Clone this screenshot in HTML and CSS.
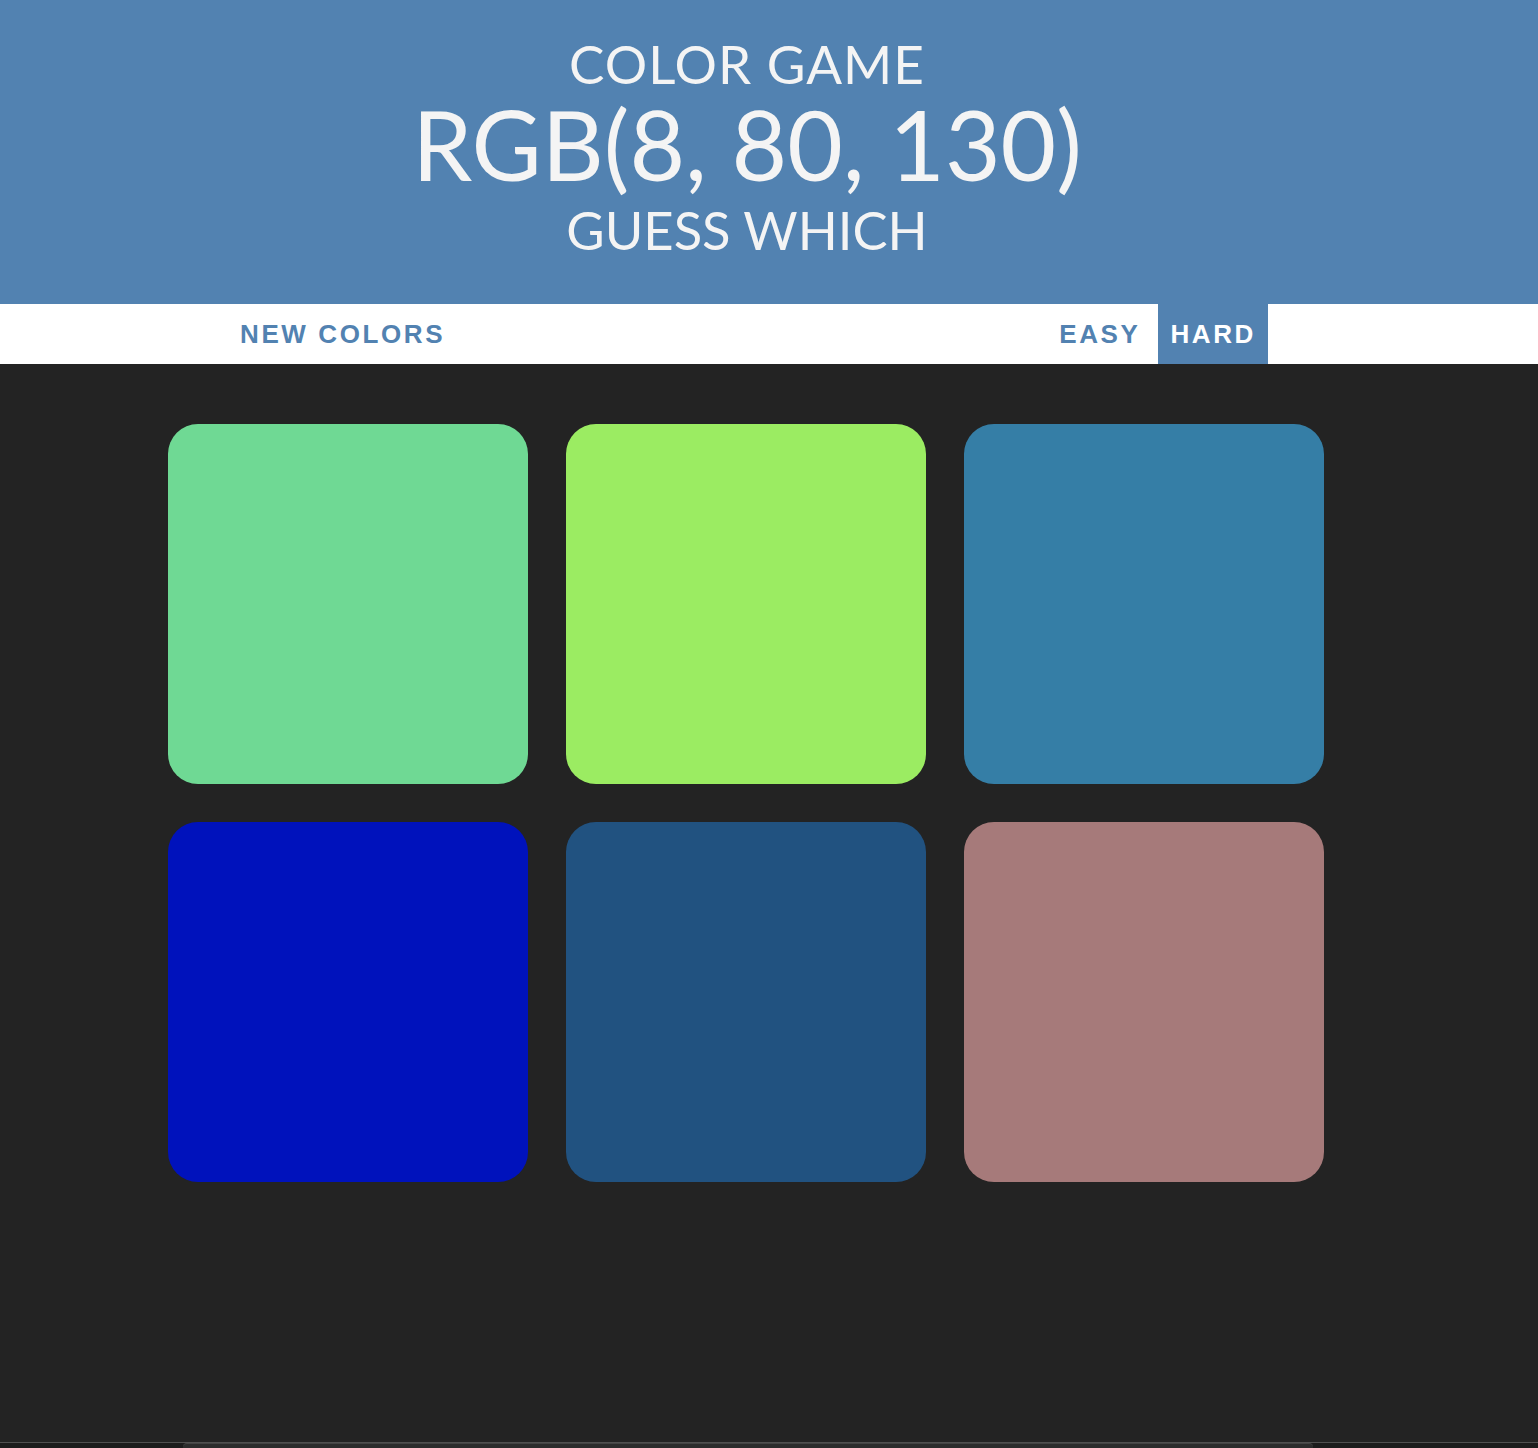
FILE: index.html
```html
<!DOCTYPE html>
<html lang="en">
<head>
<meta charset="utf-8">
<title>Color Game</title>
<link rel="stylesheet" href="styles.css">
</head>
<body>
<header class="banner">
  <h1 class="title">
    <span class="title-line title-first">COLOR GAME</span>
    <span class="title-rgb">RGB(8, 80, 130)</span>
    <span class="title-line title-last">GUESS WHICH</span>
  </h1>
</header>
<nav class="stripe">
  <div class="stripe-inner">
    <button class="btn">New Colors</button>
    <div class="modes">
      <button class="btn">Easy</button>
      <button class="btn btn-selected">Hard</button>
    </div>
  </div>
</nav>
<main class="board">
  <div class="square sq-1"></div>
  <div class="square sq-2"></div>
  <div class="square sq-3"></div>
  <div class="square sq-4"></div>
  <div class="square sq-5"></div>
  <div class="square sq-6"></div>
</main>
<div class="chrome-edge"><div class="chrome-tab"></div></div>
</body>
</html>
```

FILE: styles.css
```css
html, body {
  margin: 0;
  padding: 0;
  background: #232323;
  height: 100%;
  overflow: hidden;
}

.banner {
  background: #5282b1;
  color: #f4f4f4;
  padding: 34px 44px 38px 0;
  text-align: center;
}

.title {
  margin: 0;
  font-family: Lato, "Open Sans", sans-serif;
  font-weight: 400;
}

.title-line {
  display: block;
  font-size: 53px;
  line-height: 60px;
}

.title-first {
  letter-spacing: 1px;
}

.title-last {
  font-size: 52.5px;
  line-height: 72px;
}

.title-rgb {
  display: block;
  font-size: 96px;
  line-height: 100px;
}

.stripe {
  background: #ffffff;
  height: 60px;
}

.stripe-inner {
  display: flex;
  justify-content: space-between;
  width: 1040px;
  padding-left: 228px;
  height: 60px;
}

.modes {
  display: flex;
  gap: 6px;
}

.btn {
  border: none;
  background: none;
  margin: 0;
  padding: 0 12px;
  height: 60px;
  font-family: "Liberation Sans", Arial, sans-serif;
  font-weight: 700;
  font-size: 26px;
  line-height: 60px;
  letter-spacing: 2.6px;
  text-transform: uppercase;
  color: #5282b1;
  cursor: pointer;
}

.btn-selected {
  background: #5282b1;
  color: #ffffff;
}

.board {
  display: grid;
  grid-template-columns: repeat(3, 360px);
  grid-auto-rows: 360px;
  gap: 38px;
  padding: 60px 0 0 168px;
}

.square {
  border-radius: 30px;
}

.sq-1 { background: #6fd994; }
.sq-2 { background: #9bec62; }
.sq-3 { background: #357ea6; }
.sq-4 { background: #0012bc; }
.sq-5 { background: #215280; }
.sq-6 { background: #a67a7a; }

.chrome-edge {
  position: fixed;
  left: 0;
  right: 0;
  bottom: 0;
  height: 5px;
  border-top: 1px solid #505050;
  background: #1c1c1c;
}

.chrome-tab {
  margin: 0 225px 0 183px;
  height: 5px;
  background: #2c2c2c;
  border-top: 1px solid #444444;
  border-radius: 4px 4px 0 0;
}
```
